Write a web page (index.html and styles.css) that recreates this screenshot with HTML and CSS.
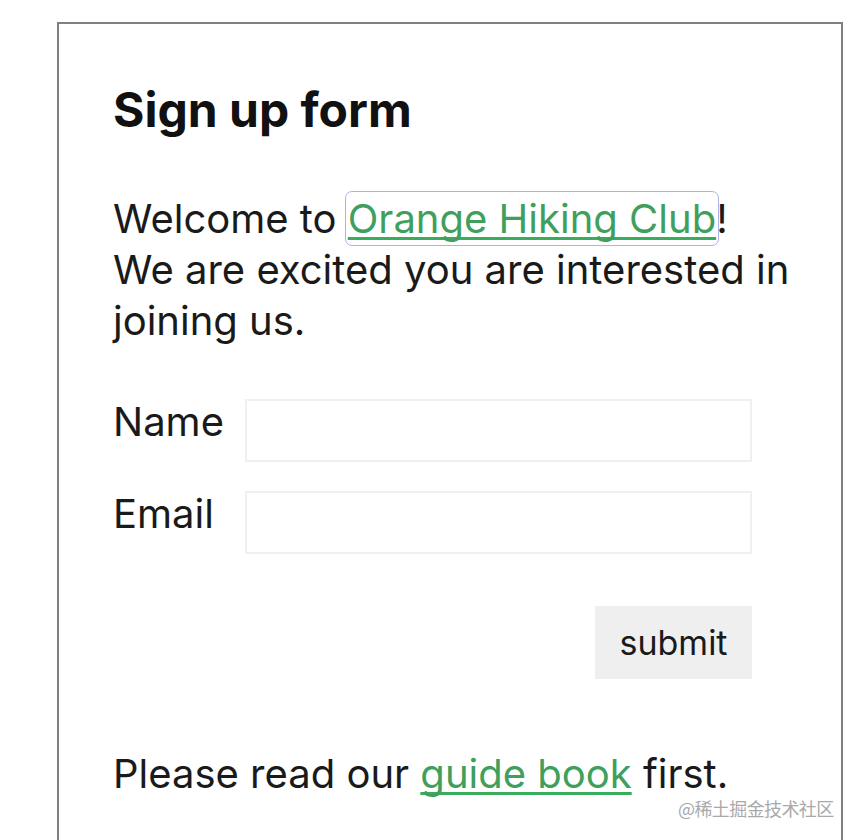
FILE: index.html
```html
<!DOCTYPE html>
<html lang="en">
<head>
<meta charset="utf-8">
<title>Sign up form</title>
<link rel="stylesheet" href="styles.css">
</head>
<body>
<main class="card">
  <h1 class="title">Sign up form</h1>
  <p class="intro">Welcome to <a class="link link-focus" href="#">Orange Hiking Club</a>!<br>We are excited you are interested in joining us.</p>
  <form class="form">
    <div class="row">
      <label class="label" for="name">Name</label>
      <input class="input" id="name" type="text">
    </div>
    <div class="row">
      <label class="label" for="email">Email</label>
      <input class="input" id="email" type="email">
    </div>
    <div class="actions">
      <button class="submit" type="button">submit</button>
    </div>
  </form>
  <p class="footer">Please read our <a class="link" href="#">guide book</a> first.</p>
</main>
<div class="watermark">@稀土掘金技术社区</div>
</body>
</html>
```

FILE: styles.css
```css
html, body {
  margin: 0;
  padding: 0;
  background: #ffffff;
  height: 840px;
  overflow: hidden;
}
body {
  font-family: "Inter", "Noto Sans", sans-serif;
  color: #1a1a1a;
  position: relative;
}
.card {
  margin: 22px 0 0 57px;
  width: 786px;
  height: 818px;
  border: 2px solid #808080;
  border-bottom: none;
  padding: 58px 0 0 54px;
  box-sizing: border-box;
}
.title {
  margin: 0;
  font-size: 48px;
  line-height: 56px;
  font-weight: 700;
  color: #111;
}
.intro {
  margin: 55px 0 0;
  font-size: 40px;
  line-height: 51px;
  font-weight: 400;
  width: 700px;
}
.link {
  color: #409f5d;
  text-decoration: underline;
  text-decoration-color: #3aad5d;
  text-decoration-thickness: 3px;
  text-underline-offset: 4px;
  text-decoration-skip-ink: none;
}
.link-focus {
  outline: 1px solid #aab3e6;
  border-radius: 4px;
  outline-offset: 2px;
}
.form {
  margin-top: 53px;
  width: 640px;
}
.row {
  display: flex;
  align-items: flex-start;
  margin-bottom: 29px;
}
.label {
  width: 132px;
  font-size: 40px;
  line-height: 46px;
}
.input {
  width: 507px;
  height: 63px;
  box-sizing: border-box;
  border: 2px solid #f0f0f0;
  background: #fff;
  outline: none;
  margin: 0;
}
.actions {
  display: flex;
  justify-content: flex-end;
  margin-top: 52px;
  width: 639px;
}
.submit {
  width: 157px;
  height: 73px;
  border: none;
  background: #efefef;
  font-family: "Inter", "Noto Sans", sans-serif;
  font-size: 34px;
  color: #1a1a1a;
  padding: 0;
}
.footer {
  margin: 69px 0 0;
  font-size: 40px;
  line-height: 51px;
}
.watermark {
  position: absolute;
  left: 678px;
  top: 795px;
  font-family: "Noto Sans CJK SC", sans-serif;
  font-size: 18px;
  color: #a9a9a9;
  letter-spacing: -0.6px;
}
```
